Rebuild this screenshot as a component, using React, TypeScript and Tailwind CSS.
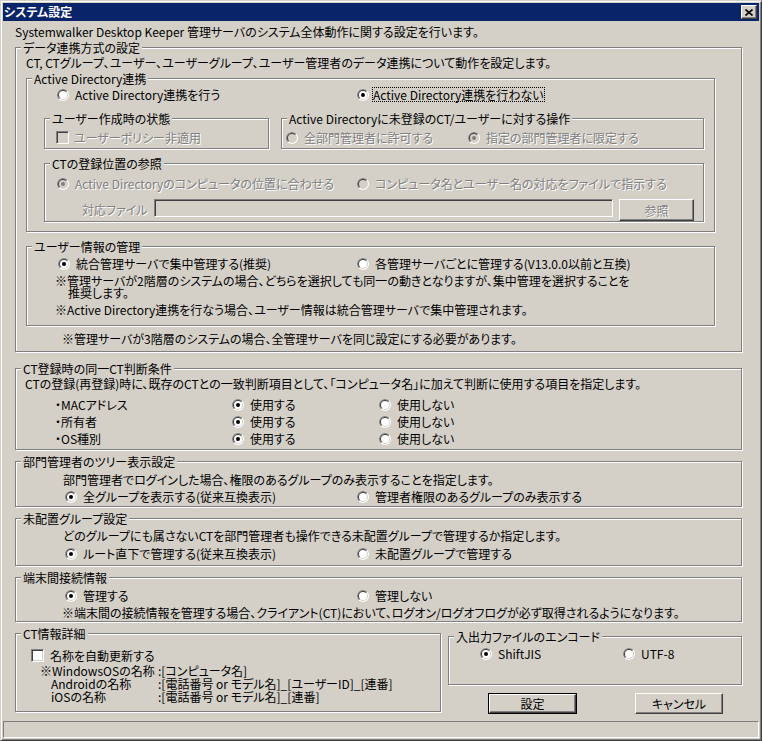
import React from "react";

const DIS = "text-[#808080] [text-shadow:1px_1px_0_#fff]";

function Radio({ checked = false, disabled = false }: { checked?: boolean; disabled?: boolean }) {
  return (
    <svg width="12" height="12" viewBox="0 0 12 12" className="block shrink-0">
      <circle cx="6" cy="6" r="6" fill="#ffffff" />
      <path d="M10.243 1.757A6 6 0 0 0 1.757 10.243Z" fill="#808080" />
      <circle cx="6" cy="6" r="5" fill="#d4d0c8" />
      <path d="M9.536 2.464A5 5 0 0 0 2.464 9.536Z" fill="#404040" />
      <circle cx="6" cy="6" r="4" fill={disabled ? "#d4d0c8" : "#ffffff"} />
      {checked && <circle cx="6" cy="6" r="2" fill={disabled ? "#808080" : "#000000"} />}
    </svg>
  );
}

function Checkbox({ disabled = false }: { disabled?: boolean }) {
  return (
    <div
      className={`w-[13px] h-[13px] shrink-0 border border-t-[#808080] border-l-[#808080] border-r-white border-b-white shadow-[inset_1px_1px_0_#404040,inset_-1px_-1px_0_#d4d0c8] ${
        disabled ? "bg-[#d4d0c8]" : "bg-white"
      }`}
    />
  );
}

function Opt({
  checked = false,
  disabled = false,
  className = "",
  children,
}: {
  checked?: boolean;
  disabled?: boolean;
  className?: string;
  children: React.ReactNode;
}) {
  return (
    <div className={`flex items-center h-[13px] shrink-0 ${className}`}>
      <Radio checked={checked} disabled={disabled} />
      <span className={`ml-[6px] whitespace-nowrap ${disabled ? DIS : ""}`}>{children}</span>
    </div>
  );
}

function Group({
  label,
  className = "",
  children,
}: {
  label: string;
  className?: string;
  children?: React.ReactNode;
}) {
  return (
    <fieldset
      className={`block shrink-0 border border-[#808080] shadow-[inset_1px_1px_0_#fff,1px_1px_0_#fff] ${className}`}
    >
      <legend className="ml-[5px] px-[2px] bg-[#d4d0c8] leading-[13px] whitespace-nowrap">{label}</legend>
      {children}
    </fieldset>
  );
}

const BEVEL =
  "border border-t-white border-l-white border-r-[#404040] border-b-[#404040] shadow-[inset_-1px_-1px_0_#808080]";

export default function App() {
  const rows = ["・MACアドレス", "・所有者", "・OS種別"];
  return (
    <div className="w-[762px] h-[741px] bg-[#d4d0c8] border border-t-[#d4d0c8] border-l-[#d4d0c8] border-r-[#404040] border-b-[#404040] shadow-[inset_1px_1px_0_#fff,inset_-1px_-1px_0_#808080] p-[2px] flex flex-col overflow-hidden font-['Noto_Sans_CJK_JP','Noto_Sans',sans-serif] text-[12px] leading-[13px] text-black [font-feature-settings:'palt']">
      {/* title bar */}
      <div className="h-[18px] shrink-0 bg-[#0a246a] flex items-center justify-between pl-[1px] pr-[2px]">
        <span className="text-white font-bold text-[12px] leading-[14px]">システム設定</span>
        <div className={`w-[16px] h-[14px] bg-[#d4d0c8] flex items-center justify-center ${BEVEL}`}>
          <svg width="8" height="7" viewBox="0 0 8 7" className="block">
            <path d="M0.5 0.5L7.5 6.5M7.5 0.5L0.5 6.5" stroke="#000" strokeWidth="1.6" />
          </svg>
        </div>
      </div>

      <div className="mt-[4px] ml-[12px] whitespace-nowrap shrink-0">
        Systemwalker Desktop Keeper 管理サーバのシステム全体動作に関する設定を行います。
      </div>

      {/* データ連携方式の設定 */}
      <Group label="データ連携方式の設定" className="ml-[12px] mt-[3px] w-[727px] h-[311px]">
        <div className="mt-[2px] ml-[10px] whitespace-nowrap">
          CT, CTグループ、ユーザー、ユーザーグループ、ユーザー管理者のデータ連携について動作を設定します。
        </div>
        <Group label="Active Directory連携" className="ml-[10px] mt-[3px] w-[689px] h-[160px]">
          <div className="flex mt-[3px]">
            <Opt className="ml-[30px] w-[300px]">Active Directory連携を行う</Opt>
            <div className="flex items-center h-[13px]">
              <Radio checked />
              <span className="ml-[3px] border border-dotted border-black leading-[13px] whitespace-nowrap">
                Active Directory連携を行わない
              </span>
            </div>
          </div>
          <div className="flex mt-[11px] ml-[17px]">
            <Group label="ユーザー作成時の状態" className="w-[225px] h-[37px]">
              <div className="flex items-center mt-[6px] ml-[11px] h-[13px]">
                <Checkbox disabled />
                <span className={`ml-[5px] whitespace-nowrap ${DIS}`}>ユーザーポリシー非適用</span>
              </div>
            </Group>
            <Group label="Active Directoryに未登録のCT/ユーザーに対する操作" className="ml-[12px] w-[423px] h-[37px]">
              <div className="flex mt-[6px]">
                <Opt disabled className="ml-[4px] w-[182px]">
                  全部門管理者に許可する
                </Opt>
                <Opt disabled checked>
                  指定の部門管理者に限定する
                </Opt>
              </div>
            </Group>
          </div>
          <Group label="CTの登録位置の参照" className="mt-[8px] ml-[17px] w-[660px] h-[65px]">
            <div className="flex mt-[7px]">
              <Opt disabled checked className="ml-[12px] w-[300px]">
                Active Directoryのコンピュータの位置に合わせる
              </Opt>
              <Opt disabled>コンピュータ名とユーザー名の対応をファイルで指示する</Opt>
            </div>
            <div className="flex items-start mt-[9px]">
              <span className={`ml-[37px] mt-[4px] w-[72px] shrink-0 whitespace-nowrap ${DIS}`}>対応ファイル</span>
              <div className="w-[459px] h-[18px] shrink-0 bg-[#d4d0c8] border border-t-[#808080] border-l-[#808080] border-r-white border-b-white shadow-[inset_1px_1px_0_#404040,inset_-1px_-1px_0_#d4d0c8]" />
              <div className={`ml-[6px] w-[75px] h-[22px] shrink-0 flex items-center justify-center ${BEVEL}`}>
                <span className={DIS}>参照</span>
              </div>
            </div>
          </Group>
        </Group>

        <Group label="ユーザー情報の管理" className="ml-[10px] mt-[8px] w-[689px] h-[86px]">
          <div className="flex mt-[4px]">
            <Opt checked className="ml-[31px] w-[299px]">
              統合管理サーバで集中管理する(推奨)
            </Opt>
            <Opt>各管理サーバごとに管理する(V13.0.0以前と互換)</Opt>
          </div>
          <div className="mt-[5px] ml-[28px] leading-[12px] whitespace-nowrap">
            <div>※管理サーバが2階層のシステムの場合、どちらを選択しても同一の動きとなりますが、集中管理を選択することを</div>
            <div className="ml-[13px]">推奨します。</div>
          </div>
          <div className="mt-[4px] ml-[28px] whitespace-nowrap">
            ※Active Directory連携を行なう場合、ユーザー情報は統合管理サーバで集中管理されます。
          </div>
        </Group>
        <div className="mt-[6px] ml-[46px] whitespace-nowrap">
          ※管理サーバが3階層のシステムの場合、全管理サーバを同じ設定にする必要があります。
        </div>
      </Group>

      {/* CT登録時の同一CT判断条件 */}
      <Group label="CT登録時の同一CT判断条件" className="ml-[12px] mt-[10px] w-[727px] h-[88px]">
        <div className="mt-[2px] ml-[9px] whitespace-nowrap">
          CTの登録(再登録)時に、既存のCTとの一致判断項目として、「コンピュータ名」に加えて判断に使用する項目を指定します。
        </div>
        {rows.map((r, i) => (
          <div key={r} className={`flex ${i === 0 ? "mt-[8px]" : "mt-[4px]"}`}>
            <span className="ml-[39px] w-[177px] shrink-0 whitespace-nowrap">{r}</span>
            <Opt checked className="w-[147px]">
              使用する
            </Opt>
            <Opt>使用しない</Opt>
          </div>
        ))}
      </Group>

      {/* 部門管理者のツリー表示設定 */}
      <Group label="部門管理者のツリー表示設定" className="ml-[12px] mt-[5px] w-[727px] h-[52px]">
        <div className="mt-[5px] ml-[47px] whitespace-nowrap">
          部門管理者でログインした場合、権限のあるグループのみ表示することを指定します。
        </div>
        <div className="flex mt-[4px]">
          <Opt checked className="ml-[49px] w-[292px]">
            全グループを表示する(従来互換表示)
          </Opt>
          <Opt>管理者権限のあるグループのみ表示する</Opt>
        </div>
      </Group>

      {/* 未配置グループ設定 */}
      <Group label="未配置グループ設定" className="ml-[12px] mt-[5px] w-[727px] h-[54px]">
        <div className="mt-[4px] ml-[47px] whitespace-nowrap">
          どのグループにも属さないCTを部門管理者も操作できる未配置グループで管理するか指定します。
        </div>
        <div className="flex mt-[5px]">
          <Opt checked className="ml-[49px] w-[292px]">
            ルート直下で管理する(従来互換表示)
          </Opt>
          <Opt>未配置グループで管理する</Opt>
        </div>
      </Group>

      {/* 端末間接続情報 */}
      <Group label="端末間接続情報" className="ml-[12px] mt-[5px] w-[727px] h-[51px]">
        <div className="flex mt-[5px]">
          <Opt checked className="ml-[49px] w-[292px]">
            管理する
          </Opt>
          <Opt>管理しない</Opt>
        </div>
        <div className="mt-[4px] ml-[46px] whitespace-nowrap">
          ※端末間の接続情報を管理する場合、クライアント(CT)において、ログオン/ログオフログが必ず取得されるようになります。
        </div>
      </Group>

      {/* bottom row */}
      <div className="flex items-start mt-[5px] shrink-0">
        <Group label="CT情報詳細" className="ml-[12px] w-[426px] h-[85px]">
          <div className="flex items-center mt-[9px] ml-[15px] h-[13px]">
            <Checkbox />
            <span className="ml-[6px] whitespace-nowrap">名称を自動更新する</span>
          </div>
          <div className="mt-[2px] ml-[24px] grid grid-cols-[118px_auto] whitespace-nowrap">
            <span>※WindowsOSの名称</span>
            <span>:[コンピュータ名]</span>
            <span className="pl-[11px]">Androidの名称</span>
            <span>:[電話番号 or モデル名]_[ユーザーID]_[連番]</span>
            <span className="pl-[11px]">iOSの名称</span>
            <span>:[電話番号 or モデル名]_[連番]</span>
          </div>
        </Group>
        <div className="ml-[7px] mt-[3px] flex flex-col">
          <Group label="入出力ファイルのエンコード" className="w-[294px] h-[55px]">
            <div className="flex mt-[4px]">
              <Opt checked className="ml-[31px] w-[143px]">
                ShiftJIS
              </Opt>
              <Opt>UTF-8</Opt>
            </div>
          </Group>
          <div className="flex mt-[8px]">
            <div className="ml-[40px] w-[89px] h-[21px] border border-black">
              <div className={`h-full w-full flex items-center justify-center ${BEVEL}`}>設定</div>
            </div>
            <div className={`ml-[58px] w-[88px] h-[21px] flex items-center justify-center ${BEVEL}`}>キャンセル</div>
          </div>
        </div>
      </div>

      {/* status bar */}
      <div className="mt-[7px] h-[17px] shrink-0 border border-t-[#808080] border-l-[#808080] border-r-white border-b-white" />
    </div>
  );
}
